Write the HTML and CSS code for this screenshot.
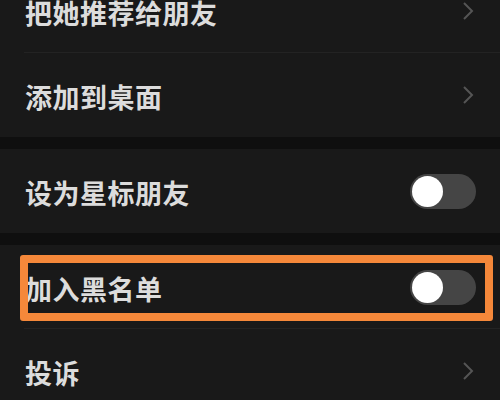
FILE: index.html
```html
<!DOCTYPE html>
<html lang="zh-CN">
<head>
    <meta charset="UTF-8">
    <title>资料设置</title>
    <link rel="stylesheet" href="styles.css">
</head>
<body>
    <div class="settings">
        <div class="group">
            <div class="row line">
                <span class="label">把她推荐给朋友</span>
                <svg class="arrow" viewBox="0 0 12 20"><path d="M2 2 L10 10 L2 18"/></svg>
            </div>
            <div class="row">
                <span class="label">添加到桌面</span>
                <svg class="arrow" viewBox="0 0 12 20"><path d="M2 2 L10 10 L2 18"/></svg>
            </div>
        </div>

        <div class="group">
            <div class="row">
                <span class="label">设为星标朋友</span>
                <div class="switch"><div class="knob"></div></div>
            </div>
        </div>

        <div class="group">
            <div class="row line">
                <span class="label">加入黑名单</span>
                <div class="switch"><div class="knob"></div></div>
                <div class="highlight"></div>
            </div>
            <div class="row">
                <span class="label">投诉</span>
                <svg class="arrow" viewBox="0 0 12 20"><path d="M2 2 L10 10 L2 18"/></svg>
            </div>
        </div>
    </div>
</body>
</html>
```

FILE: styles.css
```css
body {
    margin: 0;
    background-color: #0f0f0f;
    font-family: "Noto Sans CJK SC", "Noto Sans", sans-serif;
    overflow: hidden;
}

.settings {
    display: flex;
    flex-direction: column;
    gap: 12px;
    margin-top: -31px;
}

.group {
    background-color: #191919;
}

.row {
    position: relative;
    height: 84px;
    display: flex;
    align-items: center;
    justify-content: space-between;
    padding: 0 24px 0 25px;
}

.row.line::after {
    content: "";
    position: absolute;
    left: 24px;
    right: 0;
    bottom: 0;
    height: 1px;
    background-color: #232323;
}

.label {
    color: #dcdcdc;
    font-size: 27px;
    font-weight: bold;
    letter-spacing: 0.5px;
    margin-top: 2px;
}

.arrow {
    width: 12px;
    height: 20px;
    margin-right: 2px;
}

    .arrow path {
        fill: none;
        stroke: #555;
        stroke-width: 2;
    }

.switch {
    width: 66px;
    height: 35px;
    border-radius: 18px;
    background-color: #454545;
    display: flex;
    align-items: center;
    padding-left: 2px;
    box-sizing: border-box;
}

.knob {
    width: 31px;
    height: 31px;
    border-radius: 50%;
    background-color: #fff;
}

.highlight {
    position: absolute;
    top: 10px;
    left: 20px;
    right: 7px;
    height: 66px;
    border: 8px solid #f5883a;
    border-radius: 3px;
    box-sizing: border-box;
}
```
